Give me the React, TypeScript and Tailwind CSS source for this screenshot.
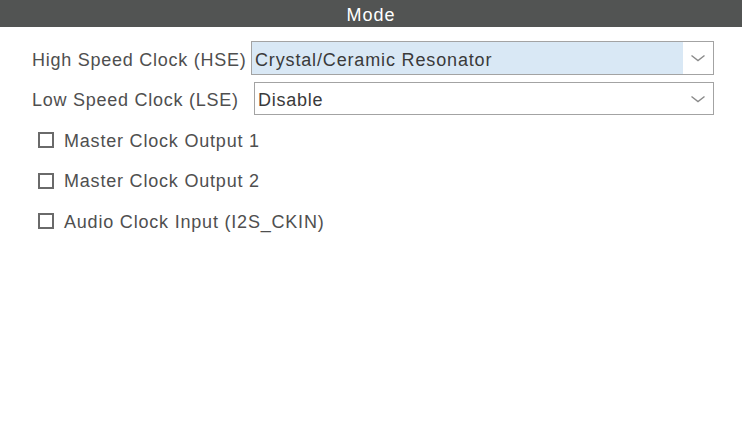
import React from "react";

function Chevron() {
  return (
    <svg width="16" height="10" viewBox="0 0 16 10" className="block">
      <path d="M1.5 2.5 L8 7.5 L14.5 2.5" fill="none" stroke="#8a8a8a" strokeWidth="1.4" />
    </svg>
  );
}

function Check({ label }: { label: string }) {
  return (
    <div className="flex items-center h-[40.5px] pl-[38px]">
      <div className="w-[16px] h-[16px] border-2 border-[#6a6a6a] bg-white" />
      <span className="ml-[10px] text-[18px] text-[#4f4f4f] tracking-[0.8px] leading-none pt-[1px]">{label}</span>
    </div>
  );
}

export default function App() {
  return (
    <div
      className="w-[742px] h-[425px] bg-white overflow-hidden"
      style={{ fontFamily: '"Liberation Sans", Arial, sans-serif' }}
    >
      <div className="h-[27px] bg-[#525453] flex items-center justify-center">
        <span className="text-white text-[18px] tracking-[1px] leading-none pt-[2px]">Mode</span>
      </div>
      <div className="pt-[14px]">
        <div className="flex items-center h-[34px]">
          <span className="pl-[32px] w-[251px] text-[18px] text-[#4f4f4f] tracking-[0.75px] whitespace-nowrap leading-none pt-[3px]">
            High Speed Clock (HSE)
          </span>
          <div className="w-[463px] h-[34px] border border-[#a3a3a3] flex items-stretch">
            <div className="flex-1 bg-[#d9e8f5] flex items-center pl-[3px] pt-[3px] text-[18px] leading-none tracking-[0.85px] text-[#3a3a3a]">
              Crystal/Ceramic Resonator
            </div>
            <div className="w-[30px] flex items-center justify-center">
              <Chevron />
            </div>
          </div>
        </div>
        <div className="flex items-center h-[33px] mt-[7px]">
          <span className="pl-[32px] w-[254px] text-[18px] text-[#4f4f4f] tracking-[0.75px] whitespace-nowrap leading-none pt-[3px]">
            Low Speed Clock (LSE)
          </span>
          <div className="w-[460px] h-[33px] border border-[#a3a3a3] flex items-stretch">
            <div className="flex-1 flex items-center pl-[3px] pt-[3px] text-[18px] leading-none tracking-[0.75px] text-[#3a3a3a]">
              Disable
            </div>
            <div className="w-[30px] flex items-center justify-center">
              <Chevron />
            </div>
          </div>
        </div>
        <div className="pt-[5px]">
          <Check label="Master Clock Output 1" />
          <Check label="Master Clock Output 2" />
          <Check label="Audio Clock Input (I2S_CKIN)" />
        </div>
      </div>
    </div>
  );
}
